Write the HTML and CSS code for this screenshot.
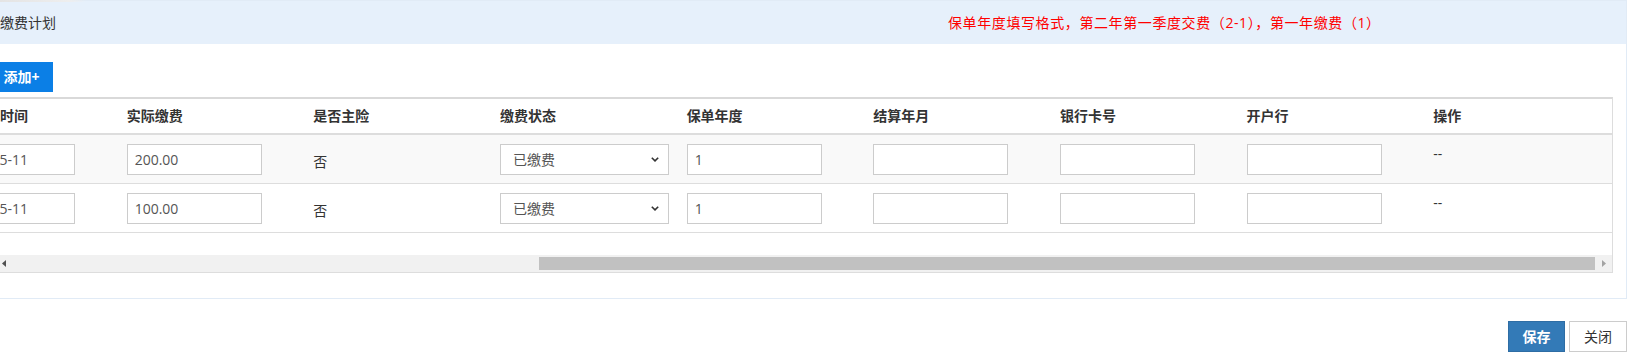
FILE: index.html
```html
<!DOCTYPE html>
<html lang="zh-CN">
<head>
<meta charset="utf-8">
<title>缴费计划</title>
<link rel="stylesheet" href="styles.css">
</head>
<body>
<div class="tab-shadow"></div>
<div class="page">
  <section class="panel">
    <header class="panel-heading">
      <span class="panel-title">缴费计划</span>
      <span class="hint">保单年度填写格式，第二年第一季度交费（2-1），第一年缴费（1）</span>
    </header>
    <div class="panel-body">
      <button class="btn-add" type="button">添加+</button>
      <div class="table-wrap">
        <div class="table-viewport">
          <table class="grid">
            <thead>
              <tr>
                <th class="first-th">计划缴费时间</th>
                <th>实际缴费</th>
                <th>是否主险</th>
                <th>缴费状态</th>
                <th>保单年度</th>
                <th>结算年月</th>
                <th>银行卡号</th>
                <th>开户行</th>
                <th>操作</th>
              </tr>
            </thead>
            <tbody>
              <tr>
                <td><input class="ipt ipt-date" type="text" value="2020-05-11"></td>
                <td><input class="ipt" type="text" value="200.00"></td>
                <td><div class="static">否</div></td>
                <td>
                  <span class="sel-wrap">
                    <select class="sel"><option>已缴费</option><option>未缴费</option></select>
                    <svg class="chev" width="8" height="5" viewBox="0 0 8 5"><path d="M0.8 0.8 L4 3.9 L7.2 0.8" fill="none" stroke="#333" stroke-width="1.6"/></svg>
                  </span>
                </td>
                <td><input class="ipt" type="text" value="1"></td>
                <td><input class="ipt" type="text" value=""></td>
                <td><input class="ipt" type="text" value=""></td>
                <td><input class="ipt" type="text" value=""></td>
                <td>--</td>
              </tr>
              <tr>
                <td><input class="ipt ipt-date" type="text" value="2020-05-11"></td>
                <td><input class="ipt" type="text" value="100.00"></td>
                <td><div class="static">否</div></td>
                <td>
                  <span class="sel-wrap">
                    <select class="sel"><option>已缴费</option><option>未缴费</option></select>
                    <svg class="chev" width="8" height="5" viewBox="0 0 8 5"><path d="M0.8 0.8 L4 3.9 L7.2 0.8" fill="none" stroke="#333" stroke-width="1.6"/></svg>
                  </span>
                </td>
                <td><input class="ipt" type="text" value="1"></td>
                <td><input class="ipt" type="text" value=""></td>
                <td><input class="ipt" type="text" value=""></td>
                <td><input class="ipt" type="text" value=""></td>
                <td>--</td>
              </tr>
            </tbody>
          </table>
        </div>
        <div class="hscroll">
          <span class="arrow"><svg width="4" height="7" viewBox="0 0 4 7"><path d="M4 0 L0 3.5 L4 7 Z" fill="#505050"/></svg></span>
          <span class="track"><span class="thumb"></span></span>
          <span class="arrow"><svg width="4" height="7" viewBox="0 0 4 7"><path d="M0 0 L4 3.5 L0 7 Z" fill="#a3a3a3"/></svg></span>
        </div>
      </div>
    </div>
  </section>
  <div class="actions">
    <button class="btn btn-primary" type="button">保存</button>
    <button class="btn btn-default" type="button">关闭</button>
  </div>
</div>
</body>
</html>
```

FILE: styles.css
```css
html, body {
  margin: 0;
  padding: 0;
}
body {
  width: 1642px;
  height: 361px;
  overflow: hidden;
  position: relative;
  background: #fff;
  font-family: "Open Sans", "Noto Sans CJK SC", sans-serif;
  font-size: 14px;
  line-height: 20px;
  color: #333;
}
.tab-shadow {
  position: absolute;
  left: 0;
  top: 0;
  width: 86px;
  height: 2px;
  background: linear-gradient(to right, #e4e4e4, #eeeeee 80%, rgba(238,238,238,0));
  z-index: 2;
}
.page {
  margin-left: -16px;
  width: 1643px;
}
.panel {
  border: 1px solid #e1ebf6;
}
.panel-heading {
  height: 43px;
  background: #e6f0fb;
  display: flex;
  align-items: center;
  padding: 0 15px;
}
.panel-title {
  color: #333;
  width: 56px;
  white-space: nowrap;
}
.hint {
  color: #ff0000;
  margin-left: 892px;
  letter-spacing: 0.6px;
  white-space: nowrap;
}
.panel-body {
  padding: 18px 13px 25px 9px;
}
.btn-add {
  display: block;
  margin: 0 0 5px -4px;
  width: 63px;
  height: 30px;
  padding: 0;
  border: 0;
  background: #0b7fe6;
  color: #fff;
  font-family: inherit;
  font-size: 14px;
  font-weight: bold;
  line-height: 30px;
  text-align: center;
}
.table-wrap {
  border: 1px solid #dddddd;
  border-top: 2px solid #d9d9d9;
}
.table-viewport {
  overflow: hidden;
}
.grid {
  width: 1680px;
  margin-left: -63px;
  margin-bottom: 22px;
  table-layout: fixed;
  border-collapse: collapse;
}
.grid th {
  text-align: left;
  font-weight: bold;
  padding: 7px 8px;
  line-height: 20px;
  border-bottom: 2px solid #dddddd;
  white-space: nowrap;
  overflow: hidden;
}
.grid .first-th {
  text-indent: 4px;
}
.grid td {
  padding: 9px 8px 8px;
  vertical-align: top;
  border-bottom: 1px solid #dddddd;
  line-height: 20px;
  white-space: nowrap;
}
.grid tbody tr:nth-child(odd) td {
  background: #f9f9f9;
}
.ipt {
  box-sizing: border-box;
  display: block;
  width: 135px;
  height: 31px;
  margin: 0;
  padding: 0 6px 0 7px;
  border: 1px solid #cccccc;
  background: #fff;
  color: #555;
  font-family: inherit;
  font-size: 14px;
  outline: none;
}
.ipt-date {
  padding-left: 14px;
}
.static {
  padding-top: 8px;
  color: #333;
}
.sel-wrap {
  position: relative;
  display: block;
  width: 169px;
}
.sel {
  box-sizing: border-box;
  display: block;
  width: 169px;
  height: 31px;
  margin: 0;
  padding: 0 12px;
  border: 1px solid #cccccc;
  border-radius: 0;
  background: #fff;
  color: #555;
  font-family: inherit;
  font-size: 14px;
  -webkit-appearance: none;
  appearance: none;
  outline: none;
}
.chev {
  position: absolute;
  right: 10px;
  top: 13px;
  pointer-events: none;
}
.hscroll {
  display: flex;
  height: 17px;
  background: #f1f1f1;
}
.arrow {
  width: 17px;
  flex: 0 0 17px;
  display: flex;
  align-items: center;
  justify-content: center;
}
.track {
  flex: 1;
  display: flex;
  justify-content: flex-end;
  align-items: center;
}
.thumb {
  width: 1056px;
  height: 13px;
  background: #c1c1c1;
}
.actions {
  display: flex;
  justify-content: flex-end;
  gap: 4px;
  margin-top: 22px;
}
.btn {
  box-sizing: border-box;
  height: 31px;
  padding: 0;
  font-family: inherit;
  font-size: 14px;
  line-height: 29px;
  text-align: center;
  border: 1px solid;
  border-radius: 0;
}
.btn-primary {
  width: 57px;
  background: #337ab7;
  border-color: #2e6da4;
  color: #fff;
  font-weight: bold;
}
.btn-default {
  width: 58px;
  background: #fff;
  border-color: #cccccc;
  color: #333;
}
```
